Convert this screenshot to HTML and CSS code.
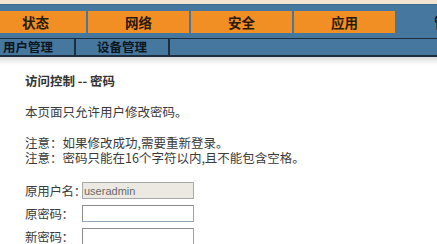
FILE: index.html
```html
<!DOCTYPE html>
<html lang="zh">
<head>
<meta charset="utf-8">
<title>访问控制 -- 密码</title>
<link rel="stylesheet" href="styles.css">
</head>
<body>
<div class="page">
  <div class="top-strip"></div>
  <nav class="tabs">
    <div class="tab">状态</div>
    <div class="tab">网络</div>
    <div class="tab">安全</div>
    <div class="tab">应用</div>
    <div class="tab tab-off">管理</div>
  </nav>
  <div class="subnav">
    <div class="sub first">用户管理</div>
    <div class="sub">设备管理</div>
    <div class="sub-rest"></div>
  </div>
  <div class="shade"></div>
  <main class="content">
    <h1 class="title">访问控制 -- 密码</h1>
    <p class="intro">本页面只允许用户修改密码。</p>
    <div class="notes">
      <p>注意：如果修改成功,需要重新登录。</p>
      <p>注意：密码只能在16个字符以内,且不能包含空格。</p>
    </div>
    <form class="form">
      <div class="row">
        <label class="lbl">原用户名：</label>
        <input class="field disabled" type="text" value="useradmin" disabled>
      </div>
      <div class="row">
        <label class="lbl">原密码：</label>
        <input class="field" type="password">
      </div>
      <div class="row">
        <label class="lbl">新密码：</label>
        <input class="field" type="password">
      </div>
    </form>
  </main>
</div>
</body>
</html>
```
FILE: styles.css
```css
html, body {
  margin: 0;
  padding: 0;
  background: #ffffff;
}
.page {
  width: 437px;
  height: 244px;
  overflow: hidden;
  font-family: "Noto Sans CJK SC", "Liberation Sans", sans-serif;
}
.top-strip {
  height: 4px;
  background: #f4e4d2;
}
.tabs {
  display: flex;
  gap: 2px;
  background: #46779e;
  border-top: 1px solid #3d6a8e;
  padding: 6px 0 5px 0;
  margin-left: -15px;
  width: 560px;
}
.tab {
  flex: 0 0 101px;
  height: 22px;
  background: #f28f24;
  color: #2a1a08;
  font-weight: bold;
  font-size: 13.5px;
  line-height: 22px;
  text-align: center;
}
.tab-off {
  background: #46779e;
  color: #111;
}
.subnav {
  display: flex;
  height: 16px;
  background: #46779e;
  border-top: 1px solid #1d2f3f;
  border-bottom: 2px solid #1d2f3f;
  margin-left: -18px;
  width: 460px;
}
.sub {
  flex: 0 0 92px;
  border-right: 2px solid #1d2f3f;
  color: #0e1620;
  font-weight: bold;
  font-size: 12.5px;
  line-height: 16px;
  text-align: center;
}
.sub-rest {
  flex: 1;
}
.shade {
  height: 8px;
  background: linear-gradient(#dcdcdc, #ffffff);
}
.content {
  padding-left: 25px;
  color: #3a3a3a;
  font-size: 12.5px;
}
.title {
  margin: 8px 0 0 0;
  font-size: 12.5px;
  font-weight: bold;
  line-height: 16px;
  color: #333333;
}
.intro {
  margin: 15px 0 0 0;
  line-height: 16px;
}
.notes {
  margin-top: 15px;
}
.notes p {
  margin: 0;
  line-height: 15px;
  white-space: nowrap;
}
.form {
  margin: 17px 0 0 0;
  display: flex;
  flex-direction: column;
  gap: 6px;
}
.row {
  display: flex;
  align-items: center;
  height: 17px;
}
.lbl {
  flex: 0 0 57px;
  min-width: 0;
  overflow: visible;
  white-space: nowrap;
  line-height: 17px;
  letter-spacing: -0.3px;
}
.field {
  flex: 0 0 112px;
  box-sizing: border-box;
  width: 112px;
  height: 17px;
  margin: 0;
  padding: 0 1px;
  border: 1px solid #8fa6bd;
  border-top-color: #8c8c8c;
  border-left-color: #8c8c8c;
  background: #ffffff;
  font-family: "Liberation Sans", sans-serif;
  font-size: 11px;
  color: #6a6a6a;
  outline: none;
}
.field.disabled {
  background: #ece9e2;
  border-color: #a8a8a8;
}
```
